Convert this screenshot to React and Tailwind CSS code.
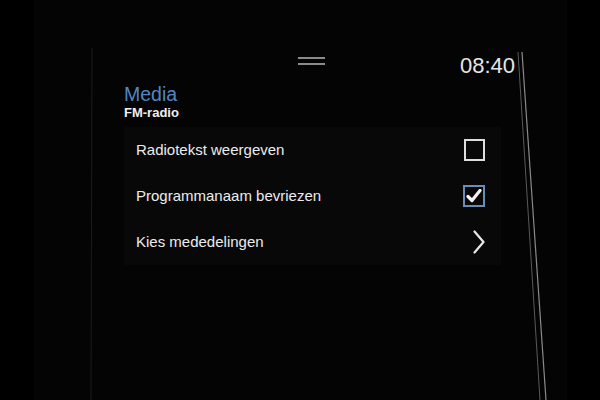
import React from "react";

const rows = [
  { label: "Radiotekst weergeven", type: "checkbox", checked: false },
  { label: "Programmanaam bevriezen", type: "checkbox", checked: true },
  { label: "Kies mededelingen", type: "link" },
];

const Checkbox = ({ checked }) =>
  checked ? (
    <div className="flex h-[22px] w-[22px] items-center justify-center border-2 border-[#6a8cb6]">
      <svg width="16" height="14" viewBox="0 0 16 14">
        <path
          d="M2 7.5 L6 11.5 L14 1.5"
          fill="none"
          stroke="#f2f2f2"
          strokeWidth="3.2"
          strokeLinecap="round"
          strokeLinejoin="round"
        />
      </svg>
    </div>
  ) : (
    <div className="h-[22px] w-[21px] border-[2.5px] border-[#dedede]" />
  );

const Chevron = () => (
  <svg width="12" height="24" viewBox="0 0 12 24">
    <path
      d="M1.5 1.5 L10.5 12 L1.5 22.5"
      fill="none"
      stroke="#e8e8e8"
      strokeWidth="2.2"
      strokeLinecap="round"
      strokeLinejoin="round"
    />
  </svg>
);

const App = () => {
  return (
    <div
      className="relative flex h-[400px] w-[600px] overflow-hidden bg-black"
      style={{ fontFamily: '"Liberation Sans", Arial, sans-serif' }}
    >
      <div className="ml-[34px] h-full w-[533px] bg-[#040404] pt-[56px]">
        <div className="flex h-[24px] items-start">
          <div className="ml-[264px] mt-[1px] flex w-[27px] flex-col gap-[4px]">
            <div className="h-[2px] bg-[#8a8a8a]" />
            <div className="h-[2px] bg-[#8a8a8a]" />
          </div>
          <p className="ml-auto mr-[52px] mt-[-3px] text-[22px] leading-[26px] text-[#e6e6e6]">
            08:40
          </p>
        </div>

        <div className="pl-[90px] pt-[3px]">
          <h1 className="text-[19.5px] leading-[22px] text-[#4f87c2]">Media</h1>
          <p className="text-[13px] font-bold leading-[16px] text-[#f0f0f0]">
            FM-radio
          </p>

          <div className="mt-[6px] w-[377px] bg-[#080808]">
            {rows.map((row) => (
              <div
                key={row.label}
                className="flex h-[46px] items-center justify-between pl-[12px] pr-[16px]"
              >
                <span className="text-[15px] text-[#ececec]">{row.label}</span>
                {row.type === "checkbox" ? (
                  <Checkbox checked={row.checked} />
                ) : (
                  <Chevron />
                )}
              </div>
            ))}
          </div>
        </div>
      </div>

      {/* glass reflections on the screen edges */}
      <svg
        className="pointer-events-none absolute inset-0"
        width="600"
        height="400"
        viewBox="0 0 600 400"
      >
        <line x1="92" y1="48" x2="91" y2="400" stroke="#1c1c1c" strokeWidth="1" />
        <line x1="518" y1="52" x2="540" y2="400" stroke="#5a5a5a" strokeWidth="1" />
        <line x1="522" y1="52" x2="546" y2="400" stroke="#8a8a8a" strokeWidth="1.2" />
      </svg>
    </div>
  );
};

export default App;
